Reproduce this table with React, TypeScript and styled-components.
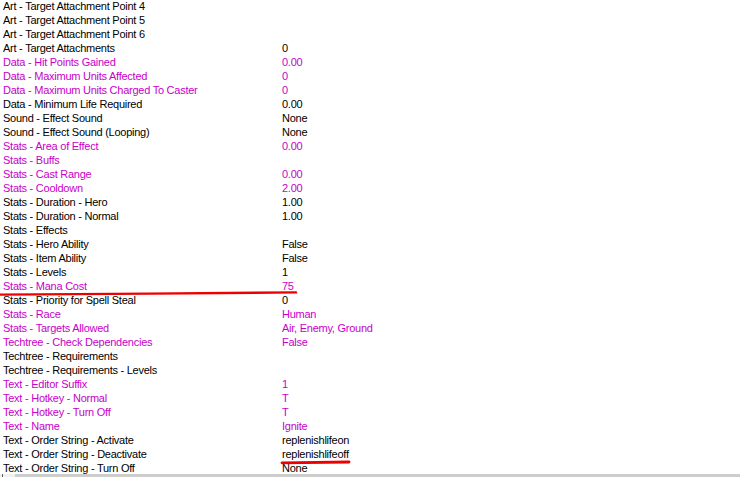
import React from "react";
import styled, { createGlobalStyle } from "styled-components";

const Global = createGlobalStyle`
  html, body { margin: 0; padding: 0; background: #fff; }
  body { width: 740px; height: 477px; overflow: hidden; }
`;

const Page = styled.div`
  position: relative;
  width: 740px;
  height: 477px;
  display: flex;
  flex-direction: column;
  background: #fff;
  font-family: "Liberation Sans", Arial, sans-serif;
  font-size: 11px;
  letter-spacing: -0.25px;
  overflow: hidden;
`;

const List = styled.div`
  flex: 1;
  margin-top: -1px;
  overflow: hidden;
`;

const Row = styled.div<{ $mod: boolean }>`
  display: grid;
  grid-template-columns: 279px 1fr;
  height: 14px;
  line-height: 14px;
  padding-left: 3px;
  white-space: nowrap;
  color: ${(p) => (p.$mod ? "#c800c8" : "#000")};
`;

const Cell = styled.span``;

const ScrollBar = styled.div`
  height: 3px;
  display: flex;
  background: #f0f0f0;
`;

const ArrowBtn = styled.div`
  width: 15px;
  position: relative;
  &::before {
    content: "";
    position: absolute;
    left: 2px;
    top: 0;
    width: 1px;
    height: 3px;
    background: #606060;
  }
`;

const Thumb = styled.div`
  flex: 1;
  background: #cdcdcd;
`;

const Marks = styled.svg`
  position: absolute;
  left: 0;
  top: 0;
  pointer-events: none;
`;

type Item = [string, string, boolean];

const items: Item[] = [
  ["Art - Target Attachment Point 4", "", false],
  ["Art - Target Attachment Point 5", "", false],
  ["Art - Target Attachment Point 6", "", false],
  ["Art - Target Attachments", "0", false],
  ["Data - Hit Points Gained", "0.00", true],
  ["Data - Maximum Units Affected", "0", true],
  ["Data - Maximum Units Charged To Caster", "0", true],
  ["Data - Minimum Life Required", "0.00", false],
  ["Sound - Effect Sound", "None", false],
  ["Sound - Effect Sound (Looping)", "None", false],
  ["Stats - Area of Effect", "0.00", true],
  ["Stats - Buffs", "", true],
  ["Stats - Cast Range", "0.00", true],
  ["Stats - Cooldown", "2.00", true],
  ["Stats - Duration - Hero", "1.00", false],
  ["Stats - Duration - Normal", "1.00", false],
  ["Stats - Effects", "", false],
  ["Stats - Hero Ability", "False", false],
  ["Stats - Item Ability", "False", false],
  ["Stats - Levels", "1", false],
  ["Stats - Mana Cost", "75", true],
  ["Stats - Priority for Spell Steal", "0", false],
  ["Stats - Race", "Human", true],
  ["Stats - Targets Allowed", "Air, Enemy, Ground", true],
  ["Techtree - Check Dependencies", "False", true],
  ["Techtree - Requirements", "", false],
  ["Techtree - Requirements - Levels", "", false],
  ["Text - Editor Suffix", "1", true],
  ["Text - Hotkey - Normal", "T", true],
  ["Text - Hotkey - Turn Off", "T", true],
  ["Text - Name", "Ignite", true],
  ["Text - Order String - Activate", "replenishlifeon", false],
  ["Text - Order String - Deactivate", "replenishlifeoff", false],
  ["Text - Order String - Turn Off", "None", false],
];

export default function App() {
  return (
    <Page>
      <Global />
      <List>
        {items.map(([name, value, mod]) => (
          <Row key={name} $mod={mod}>
            <Cell>{name}</Cell>
            <Cell>{value}</Cell>
          </Row>
        ))}
      </List>
      <ScrollBar>
        <ArrowBtn />
        <Thumb />
      </ScrollBar>
      <Marks width="740" height="477" viewBox="0 0 740 477">
        <path d="M0 294.6 L150 293.6 L296 292.4" stroke="#ee0000" strokeWidth="2.4" fill="none" strokeLinecap="round" />
        <path d="M282 462.8 L349 462" stroke="#ee0000" strokeWidth="2.8" fill="none" strokeLinecap="round" />
      </Marks>
    </Page>
  );
}
